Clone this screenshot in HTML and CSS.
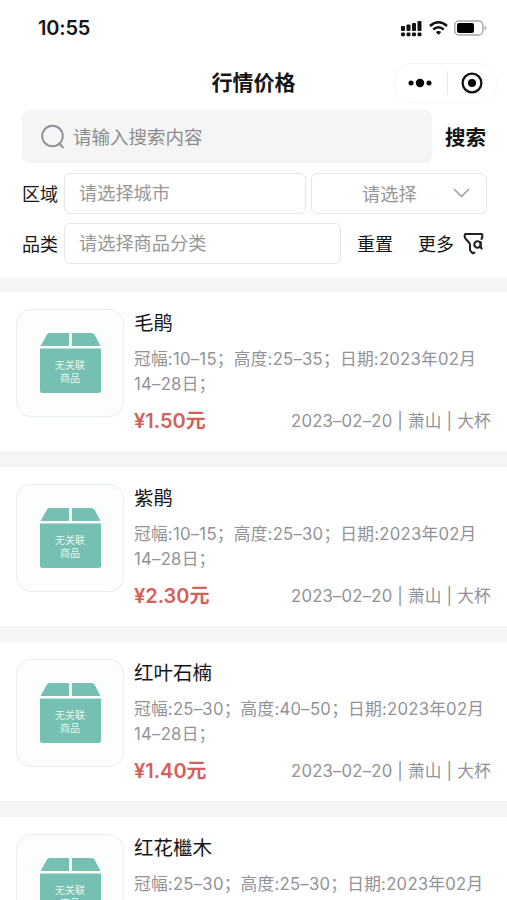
FILE: index.html
```
<!DOCTYPE html>
<html lang="zh-CN">
<head>
<meta charset="utf-8">
<title>行情价格</title>
<link rel="stylesheet" href="styles.css">
</head>
<body>
<svg class="defs" width="0" height="0" aria-hidden="true">
  <symbol id="box" viewBox="0 0 61 60">
    <path d="M9 0H29V13H.5L7 1.500Q7.800 0 9 0ZM32 0H51.500Q53.500 0 54.500 1.500L60.500 13H32Z"/>
    <path d="M0 15.500H61V57.500Q61 60 58.500 60H2.500Q0 60 0 57.500Z"/>
  </symbol>
</svg>
<header class="top">
  <div class="status">
    <span class="time">10:55</span>
    <svg class="signals" width="88" height="18" viewBox="0 0 88 18">
      <g fill="#111">
        <rect x="1" y="7" width="4" height="5" rx="1"/><rect x="6.500" y="5.500" width="4" height="6.500" rx="1"/><rect x="12" y="4" width="4" height="8" rx="1"/><rect x="17.500" y="2" width="4" height="10" rx="1"/>
        <rect x="1" y="13.500" width="4" height="3.700" rx="1.200"/><rect x="6.500" y="13.500" width="4" height="3.700" rx="1.200"/><rect x="12" y="13.500" width="4" height="3.700" rx="1.200"/><rect x="17.500" y="13.500" width="4" height="3.700" rx="1.200"/>
        <path d="M35.800 13Q38.500 11 41.200 13L38.500 16Z"/>
      </g>
      <g fill="none" stroke="#111" stroke-width="2.500"><path d="M30 7Q38.500-.6 47 7"/><path d="M33.200 10.500Q38.500 6 43.800 10.500"/></g>
      <rect x="54.800" y="2" width="28" height="14" rx="4" fill="#fff" stroke="#aaa" stroke-width="1.500"/>
      <rect x="57" y="4" width="17" height="10" rx="2" fill="#000"/>
      <path d="M84.500 6.500Q88.500 9 84.500 11.500Z" fill="#aaa"/>
    </svg>
  </div>
  <div class="nav">
    <h1 class="nav-title">行情价格</h1>
    <div class="capsule">
      <svg width="26" height="10" viewBox="0 0 26 10"><circle cx="4" cy="5" r="2.500"/><circle cx="13" cy="5" r="4.200"/><circle cx="22" cy="5" r="2.500"/></svg>
      <i class="capsule-line"></i>
      <svg width="22" height="22" viewBox="0 0 22 22"><circle cx="11" cy="11" r="9.400" fill="none" stroke="#111" stroke-width="2.300"/><circle cx="11" cy="11" r="4"/></svg>
    </div>
  </div>
  <div class="search">
    <div class="search-box">
      <svg width="25" height="26" viewBox="0 0 25 26" fill="none" stroke="#8f9099" stroke-width="1.900"><circle cx="11.500" cy="12" r="10.300"/><path d="M18.300 19.500L22.500 24"/></svg>
      <span>请输入搜索内容</span>
    </div>
    <b class="search-btn">搜索</b>
  </div>
  <div class="filter">
    <span class="label">区域</span>
    <div class="field city">请选择城市</div>
    <div class="field pick"><span>请选择</span>
      <svg width="17" height="10" viewBox="0 0 17 10" fill="none" stroke="#999" stroke-width="1.400"><path d="M1 1L8.500 8.500L16 1"/></svg>
    </div>
  </div>
  <div class="filter">
    <span class="label">品类</span>
    <div class="field kind">请选择商品分类</div>
    <span class="action reset">重置</span>
    <span class="action more">更多</span>
    <svg class="funnel" width="21" height="23" viewBox="0 0 21 23" fill="none" stroke="#222" stroke-width="2.100" stroke-linecap="round" stroke-linejoin="round"><path d="M18.500 7L19.300 5V3Q19.300 2 18.300 2H3Q1.700 2 1.700 3.200V4.500Q1.700 6 3 7.300L6 10.500Q7 11.500 7 13V17.500Q7 18.500 7.700 19.200L9.500 21Q10.500 21.500 11.300 20.500"/><circle cx="14.500" cy="12.500" r="3.200"/><path d="M17.700 10V15.300L18.700 16.500"/></svg>
  </div>
</header>
<main class="list">
  <article class="item">
    <div class="thumb"><svg class="box"><use href="#box"/></svg><span class="thumb-text">无关联<br>商品</span></div>
    <div class="info">
      <h2 class="name">毛鹃</h2>
      <p class="desc">冠幅:10–15；高度:25–35；日期:2023年02月<br>14–28日；</p>
      <div class="foot"><b class="price">¥1.50元</b><span class="meta">2023–02–20 | 萧山 | 大杯</span></div>
    </div>
  </article>
  <article class="item">
    <div class="thumb"><svg class="box"><use href="#box"/></svg><span class="thumb-text">无关联<br>商品</span></div>
    <div class="info">
      <h2 class="name">紫鹃</h2>
      <p class="desc">冠幅:10–15；高度:25–30；日期:2023年02月<br>14–28日；</p>
      <div class="foot"><b class="price">¥2.30元</b><span class="meta">2023–02–20 | 萧山 | 大杯</span></div>
    </div>
  </article>
  <article class="item">
    <div class="thumb"><svg class="box"><use href="#box"/></svg><span class="thumb-text">无关联<br>商品</span></div>
    <div class="info">
      <h2 class="name">红叶石楠</h2>
      <p class="desc">冠幅:25–30；高度:40–50；日期:2023年02月<br>14–28日；</p>
      <div class="foot"><b class="price">¥1.40元</b><span class="meta">2023–02–20 | 萧山 | 大杯</span></div>
    </div>
  </article>
  <article class="item">
    <div class="thumb"><svg class="box"><use href="#box"/></svg><span class="thumb-text">无关联<br>商品</span></div>
    <div class="info">
      <h2 class="name">红花檵木</h2>
      <p class="desc">冠幅:25–30；高度:25–30；日期:2023年02月</p>
    </div>
  </article>
</main>
</body>
</html>
```
FILE: styles.css
```
* { box-sizing: border-box; margin: 0; padding: 0; }
html, body { height: 900px; overflow: hidden; }
body { background: #f5f5f5; color: #151515; font-family: Inter, "Noto Sans CJK SC", sans-serif; display: flex; flex-direction: column; }
svg { display: block; flex: none; }
.defs { position: absolute; }
.top { height: 277.500px; flex: none; background: #fff; }
.status { height: 55px; padding: 0 19px 0 38px; display: flex; align-items: center; justify-content: space-between; }
.time { font-size: 20px; font-weight: 600; letter-spacing: -.2px; }
.nav { height: 55px; display: grid; grid-template-columns: 1fr auto 1fr; align-items: center; }
.nav-title { grid-column: 2; font-size: 21px; line-height: 30px; font-weight: 700; }
.capsule { justify-self: end; margin-right: 9px; width: 105px; height: 40px; border: 1px solid #f6f6f6; border-radius: 20px; display: flex; align-items: center; padding: 0 14px 0 13px; justify-content: space-between; }
.capsule-line { width: 1px; height: 24px; background: #e8e8e8; }
.search { display: flex; align-items: center; padding-left: 22px; height: 53px; }
.search-box { width: 410px; height: 53px; border-radius: 7px; background: #f5f5f5; display: flex; align-items: center; gap: 7px; padding-left: 19px; color: #8c8c8c; font-size: 18.500px; }
.search-box span, .search-btn { padding-bottom: 2px; }
.search-btn { margin-left: 13px; font-size: 20.500px; }
.filter { display: flex; align-items: center; height: 40px; margin-top: 10px; padding-left: 22px; }
.label { width: 42px; font-size: 18px; padding-bottom: 1px; }
.field { height: 41px; flex: none; border: 1.500px solid #e6e6e6; border-radius: 6px; display: flex; align-items: center; padding-left: 14px; color: #979797; font-size: 18.200px; padding-bottom: 3px; }
.city { width: 242px; }
.pick { width: 176px; margin-left: 5px; padding: 0 16px 0 50px; justify-content: space-between; }
.kind { width: 277px; }
.action { font-size: 18px; padding-bottom: 1px; }
.reset { margin-left: 16px; }
.more { margin-left: 25px; }
.funnel { margin-left: 9px; }
.list { padding-top: 14.500px; flex: 1; min-height: 0; overflow: hidden; }
.item { height: 159px; margin-bottom: 16px; background: #fff; padding: 16.500px 16px 0; display: flex; gap: 10px; }
.thumb { width: 108px; height: 108px; flex: none; border: 1.500px solid #e6efed; border-radius: 15px; background: #fbfefd; display: grid; place-items: center; }
.box { grid-area: 1 / 1; width: 61px; height: 60px; fill: #76c0b3; }
.thumb-text { grid-area: 1 / 1; color: #e6f6f2; font-size: 10px; line-height: 13px; text-align: center; padding-top: 18px; }
.info { flex: 1; min-width: 0; }
.name { font-size: 19.500px; line-height: 28px; font-weight: 400; }
.desc { margin-top: 10.500px; font-size: 16.700px; line-height: 24.500px; letter-spacing: .25px; color: #919297; white-space: nowrap; }
.foot { margin-top: 9.500px; height: 28px; display: flex; align-items: center; justify-content: space-between; }
.price { font-size: 20px; font-weight: 600; color: #d4605b; }
.meta { font-size: 16.700px; letter-spacing: .2px; color: #919297; white-space: nowrap; }
.item:last-child { margin-bottom: 0; }
```
